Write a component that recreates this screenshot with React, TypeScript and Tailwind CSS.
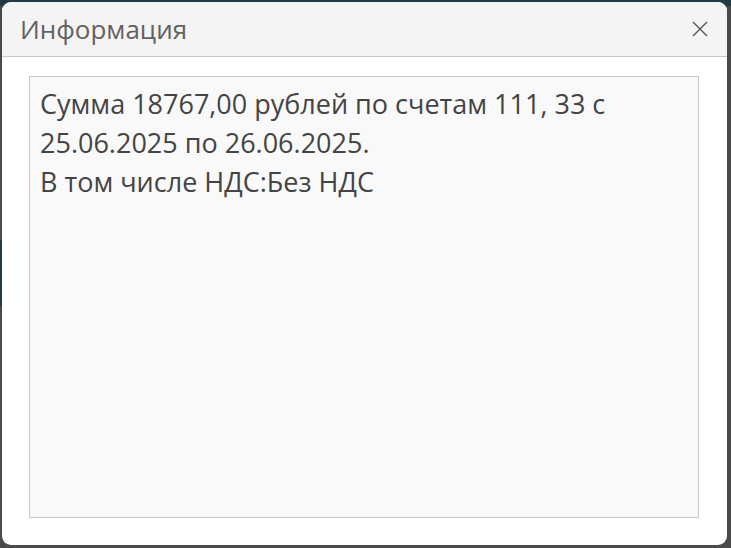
import React from 'react';

const App: React.FC = () => {
  return (
    <div className="relative w-[731px] h-[548px] overflow-hidden bg-[#4a4a4a]">
      {/* page behind the overlay */}
      <div className="h-[6px] bg-[#1f3b45]" />
      <div className="mt-[234px] h-[66px] w-[12px] bg-[#1f3b45]" />

      <div
        className="absolute left-[2px] top-[2px] w-[725px] h-[543px] rounded-[9px] bg-white flex flex-col overflow-hidden"
        style={{ fontFamily: '"Open Sans", "Noto Sans", sans-serif' }}
      >
        <div className="h-[55px] shrink-0 flex items-center justify-between bg-[#f4f4f4] border-b border-[#c8c8c8] pl-[18px] pr-[19px]">
          <span className="text-[26px] text-[#626262] leading-none">Информация</span>
          <button className="w-[16px] h-[16px] flex items-center justify-center text-[#555]">
            <svg width="16" height="16" viewBox="0 0 16 16" fill="none" stroke="currentColor" strokeWidth="1.4">
              <path d="M1 1 L15 15 M15 1 L1 15" />
            </svg>
          </button>
        </div>
        <div className="flex-1 pt-[19px] pb-[27px] pl-[27px] pr-[28px] flex">
          <div className="flex-1 border border-[#c8c8c8] bg-[#f9f9f9] px-[10px] pt-[7px] text-[27px] leading-[39px] text-[#444]">
            Сумма 18767,00 рублей по счетам 111, 33 с<br />
            25.06.2025 по 26.06.2025.<br />
            В том числе НДС:Без НДС
          </div>
        </div>
      </div>
    </div>
  );
};

export default App;
